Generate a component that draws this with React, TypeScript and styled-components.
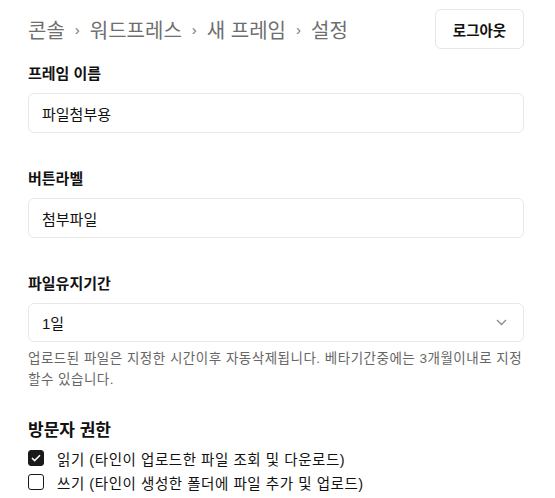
import {Fragment} from "react";
import styled, {createGlobalStyle} from "styled-components";

const GlobalStyle = createGlobalStyle`
  html, body {
    margin: 0;
    padding: 0;
    background: #ffffff;
  }
  body {
    font-family: "Liberation Sans", "Noto Sans CJK KR", sans-serif;
    color: #111111;
  }
  * {
    box-sizing: border-box;
  }
`;

const Page = styled.div`
  width: 555px;
  padding: 9px 31px 0 28px;
`;

const Header = styled.header`
  display: flex;
  align-items: center;
  justify-content: space-between;
  height: 40px;
  margin-bottom: 14px;
`;

const Crumbs = styled.nav`
  display: flex;
  align-items: center;
  gap: 10px;
  font-size: 20px;
  color: #6e6e6e;
`;

const Sep = styled.span`
  font-size: 15px;
  color: #777777;
`;

const LogoutButton = styled.button`
  width: 89px;
  height: 40px;
  border: 1px solid #e6e6e6;
  border-radius: 6px;
  background: #ffffff;
  font-family: inherit;
  font-size: 14.5px;
  font-weight: 700;
  color: #111111;
`;

const Field = styled.div<{ $gap?: number }>`
  margin-bottom: ${(p) => p.$gap ?? 35}px;
`;

const Label = styled.label`
  display: block;
  font-size: 15px;
  font-weight: 700;
  line-height: 22px;
  margin-bottom: 8px;
`;

const TextInput = styled.div`
  display: flex;
  align-items: center;
  height: 40px;
  padding: 0 13px;
  border: 1px solid #e8e8e8;
  border-radius: 6px;
  font-size: 15px;
`;

const Select = styled(TextInput)`
  justify-content: space-between;
  padding-right: 16px;
  height: 39px;
`;

const Help = styled.p`
  margin: 6px 0 0;
  font-size: 13.5px;
  letter-spacing: 0.5px;
  line-height: 21px;
  color: #666666;
`;

const SectionTitle = styled.h3`
  margin: 2px 0 3px;
  font-size: 17px;
  font-weight: 700;
  line-height: 24px;
`;

const CheckRow = styled.div`
  display: flex;
  align-items: center;
  gap: 13px;
  height: 24px;
  font-size: 14.5px;
  letter-spacing: 0.55px;
`;

const Box = styled.span<{ $checked?: boolean }>`
  display: flex;
  align-items: center;
  justify-content: center;
  flex: none;
  width: 16px;
  height: 16px;
  border-radius: 3px;
  border: 1.5px solid #1a1a1a;
  background: ${(p) => (p.$checked ? "#1a1a1a" : "#ffffff")};
`;

const Chevron = () => (
  <svg width="11" height="7" viewBox="0 0 11 7" fill="none">
    <path d="M1 1l4.5 4.5L10 1" stroke="#8a8a8a" strokeWidth="1.3" />
  </svg>
);

const Check = () => (
  <svg width="10" height="8" viewBox="0 0 10 8" fill="none">
    <path d="M1 4l2.6 2.6L9 1.2" stroke="#ffffff" strokeWidth="1.5" />
  </svg>
);

const App = () => {
  const crumbs = ["콘솔", "워드프레스", "새 프레임", "설정"];
  return (
    <>
      <GlobalStyle />
      <Page>
        <Header>
          <Crumbs>
            {crumbs.map((c, i) => (
              <Fragment key={c}>
                {i > 0 && <Sep>›</Sep>}
                <span>{c}</span>
              </Fragment>
            ))}
          </Crumbs>
          <LogoutButton>로그아웃</LogoutButton>
        </Header>

        <Field>
          <Label>프레임 이름</Label>
          <TextInput>파일첨부용</TextInput>
        </Field>

        <Field>
          <Label>버튼라벨</Label>
          <TextInput>첨부파일</TextInput>
        </Field>

        <Field $gap={29}>
          <Label>파일유지기간</Label>
          <Select>
            <span>1일</span>
            <Chevron />
          </Select>
          <Help>
            업로드된 파일은 지정한 시간이후 자동삭제됩니다. 베타기간중에는 3개월이내로 지정할수 있습니다.
          </Help>
        </Field>

        <SectionTitle>방문자 권한</SectionTitle>
        <CheckRow>
          <Box $checked>
            <Check />
          </Box>
          읽기 (타인이 업로드한 파일 조회 및 다운로드)
        </CheckRow>
        <CheckRow>
          <Box />
          쓰기 (타인이 생성한 폴더에 파일 추가 및 업로드)
        </CheckRow>
      </Page>
    </>
  );
};

export default App;
